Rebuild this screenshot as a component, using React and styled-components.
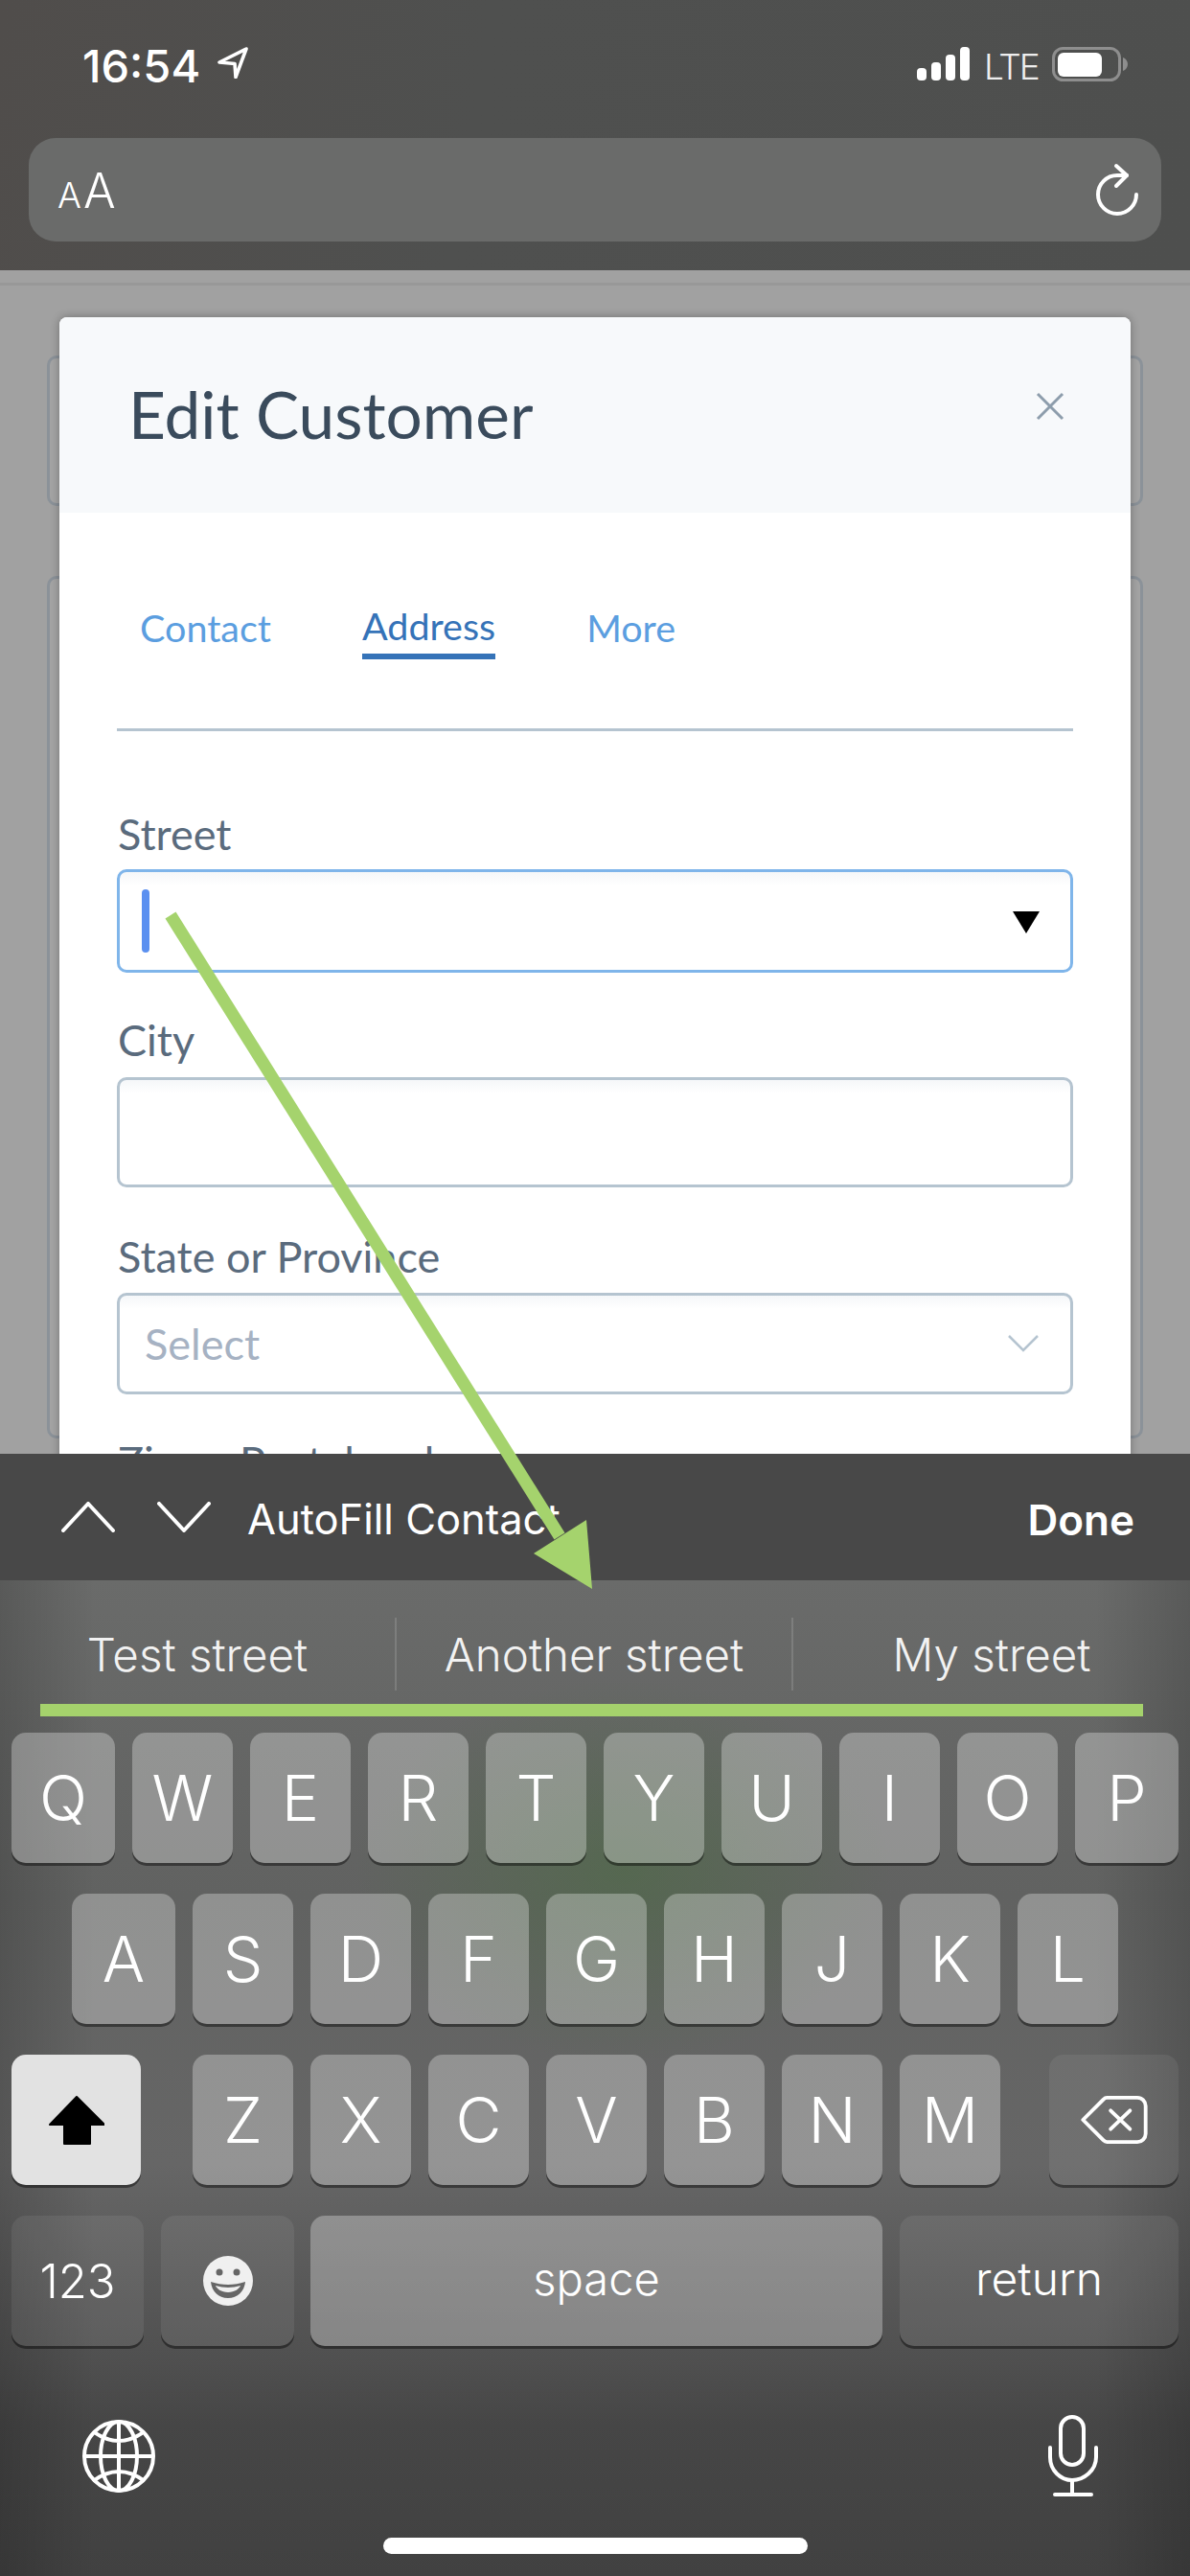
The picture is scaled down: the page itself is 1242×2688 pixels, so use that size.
import styled, { createGlobalStyle } from "styled-components";

const GlobalStyle = createGlobalStyle`
  html, body { margin: 0; padding: 0; background: #404040; }
  * { box-sizing: border-box; }
`;

const IOS_FONT = `Inter, "Liberation Sans", sans-serif`;
const WEB_FONT = `Lato, "Open Sans", sans-serif`;

const Screen = styled.div`
  position: relative;
  width: 1242px;
  height: 2688px;
  overflow: hidden;
  display: flex;
  flex-direction: column;
  font-family: ${IOS_FONT};
`;

/* browser chrome */
const Chrome = styled.div`
  height: 282px;
  flex: none;
  padding: 0 30px;
  background: linear-gradient(100deg, #504d4b 0%, #4f504f 40%, #4e4f4e 100%);
`;

const StatusBar = styled.div`
  height: 144px;
  display: flex;
  justify-content: space-between;
  padding: 49px 34px 0 56px;
`;

const StatusGroup = styled.div`
  display: flex;
  align-items: flex-start;
`;

const Time = styled.div`
  color: #fff;
  font-size: 47px;
  line-height: 40px;
  font-weight: 500;
  width: 141px;
`;

const Carrier = styled.div`
  color: #eee;
  font-size: 37px;
  line-height: 42px;
  width: 71px;
  margin-left: 14px;
  font-weight: 300;
  letter-spacing: -2px;
`;

const UrlBar = styled.div`
  height: 108px;
  border-radius: 28px;
  background: #6a6b6a;
  display: flex;
  align-items: center;
  justify-content: space-between;
  padding: 0 20px 0 30px;
`;

const TextSize = styled.div`
  color: #fff;
  font-weight: 300;
  display: flex;
  align-items: baseline;
  gap: 2px;
  font-size: 37px;
  padding-top: 2px;
`;

const TextSizeBig = styled.span`
  font-size: 50px;
`;

const ReloadWrap = styled.div`
  margin-top: 4px;
  display: flex;
`;

/* dimmed page with the dialog */
const Page = styled.div`
  position: relative;
  height: 1235px;
  flex: none;
  overflow: hidden;
  background: #a1a1a1;
  padding-top: 49px;
`;

const PageRule = styled.div`
  position: absolute;
  left: 0;
  right: 0;
  top: 13px;
  height: 3px;
  background: #989898;
`;

const BehindCard = styled.div`
  position: absolute;
  left: 49px;
  width: 1144px;
  top: ${(p) => p.$top}px;
  height: ${(p) => p.$height}px;
  border: 3px solid #8b9299;
  border-radius: 10px;
  background: #a4a4a4;
`;

const Dialog = styled.div`
  position: relative;
  width: 1118px;
  margin-left: 62px;
  height: 1300px;
  background: #fff;
  border-radius: 8px 8px 0 0;
  box-shadow: 0 0 10px rgba(0, 0, 0, 0.3);
  font-family: ${WEB_FONT};
`;

const DialogHeader = styled.div`
  height: 204px;
  background: #f7f9fb;
  border-radius: 8px 8px 0 0;
  display: flex;
  justify-content: space-between;
  align-items: flex-start;
  padding: 59px 68px 0 72px;
`;

const DialogTitle = styled.div`
  color: #3a4b5c;
  font-size: 67.500px;
  line-height: 84px;
  font-weight: 400;
`;

const CloseIcon = styled.svg`
  width: 32px;
  height: 32px;
  margin-top: 18px;
`;

const DialogBody = styled.div`
  padding: 93px 60px 0;
`;

const TabRow = styled.div`
  display: flex;
  gap: 95px;
  height: 60px;
  padding-left: 24px;
  align-items: flex-start;
  margin-bottom: 72px;
`;

const Tab = styled.div`
  height: ${(p) => (p.$active ? "60px" : "auto")};
  margin-top: ${(p) => (p.$active ? 0 : "2px")};
  font-size: 39.500px;
  line-height: 50px;
  color: ${(p) => (p.$active ? "#3573b8" : "#5b9ee0")};
  border-bottom: ${(p) => (p.$active ? "6px solid #3573b8" : "none")};
`;

const Divider = styled.div`
  height: 3px;
  background: #b5c4d0;
  margin-bottom: 81px;
`;

const Field = styled.div`
  margin-bottom: ${(p) => p.$gap}px;
`;

const FieldLabel = styled.div`
  color: #5a6b7d;
  font-size: 45px;
  line-height: 52px;
  padding-left: 1px;
  margin-bottom: ${(p) => p.$gap}px;
`;

const InputBox = styled.div`
  height: ${(p) => p.$height}px;
  border: 3px solid ${(p) => (p.$focused ? "#7fb5ea" : "#b5c4d0")};
  border-radius: 10px;
  background: linear-gradient(#f5f7f9, #fff 14px);
  display: flex;
  align-items: center;
  justify-content: space-between;
  padding: 0 ${(p) => p.$right || 30}px 0 23px;
`;

const Caret = styled.div`
  width: 8px;
  height: 66px;
  border-radius: 4px;
  background: #5b90f0;
`;

const NativeArrow = styled.div`
  width: 0;
  height: 0;
  margin-top: 2px;
  border-left: 14px solid transparent;
  border-right: 14px solid transparent;
  border-top: 23px solid #000;
`;

const Placeholder = styled.div`
  color: #a6b2c3;
  font-size: 45px;
  margin-left: 3px;
`;

/* keyboard */
const Keyboard = styled.div`
  flex: 1;
  display: flex;
  flex-direction: column;
  background:
    radial-gradient(ellipse 280px 200px at 650px 436px, rgba(70, 110, 60, 0.45), transparent),
    linear-gradient(90deg, rgba(0, 0, 0, 0.16), transparent 8%, transparent 92%, rgba(0, 0, 0, 0.16)),
    linear-gradient(#6a6b6a 132px, #666766 262px, #616261 462px, #666 742px, #505050 943px, #464646 1013px, #414141 1171px);
`;

const Toolbar = styled.div`
  height: 132px;
  flex: none;
  background: #484848;
  display: flex;
  align-items: center;
  padding: 6px 58px 0 64px;
`;

const ToolbarIcon = styled.svg`
  width: 56px;
  height: 32px;
  margin-right: ${(p) => p.$gap}px;
  margin-bottom: 6px;
`;

const AutoFill = styled.div`
  color: #fff;
  font-size: 43.500px;
  font-weight: 400;
  flex: 1;
  margin-bottom: 2px;
`;

const Done = styled.div`
  color: #fff;
  font-size: 44px;
  font-weight: 600;
`;

const Suggestions = styled.div`
  display: grid;
  grid-template-columns: repeat(3, 414px);
  margin-top: 39px;
`;

const Suggestion = styled.div`
  height: 76px;
  display: flex;
  align-items: center;
  justify-content: center;
  color: #f2f2f2;
  font-size: 47.500px;
  font-weight: 300;
  border-right: ${(p) => (p.$last ? "none" : "2px solid rgba(255,255,255,0.14)")};
`;

const GreenUnderline = styled.div`
  height: 13px;
  margin: 14px 49px 17px 42px;
  background: #a5d26c;
`;

const KeyRows = styled.div`
  display: flex;
  flex-direction: column;
  gap: 32px;
`;

const KeyRow = styled.div`
  display: flex;
  height: 136px;
  gap: 18px;
  padding-left: ${(p) => p.$left || 12}px;
`;

const Key = styled.div`
  width: ${(p) => p.$width || 105}px;
  margin-left: ${(p) => p.$offset || 0}px;
  padding-bottom: ${(p) => p.$lift || 0}px;
  flex: none;
  height: 136px;
  border-radius: 15px;
  display: flex;
  align-items: center;
  justify-content: center;
  color: ${(p) => (p.$light ? "#000" : "#fff")};
  font-size: ${(p) => p.$size || 66}px;
  font-weight: 300;
  background: ${(p) =>
    p.$light ? "#e2e2e2" : p.$dim ? "rgba(255,255,255,0.07)" : "rgba(255,255,255,0.3)"};
  box-shadow: 0 3px 0 rgba(0, 0, 0, 0.42);
`;

const BottomBar = styled.div`
  display: flex;
  justify-content: space-between;
  align-items: center;
  padding: 72px 93px 0 84px;
`;

const HomeIndicator = styled.div`
  width: 443px;
  height: 17px;
  border-radius: 9px;
  background: #fff;
  margin: 42px auto 0;
`;

/* green annotation arrow over the form */
const ArrowOverlay = styled.svg`
  position: absolute;
  left: 0;
  top: 0;
  width: 1242px;
  height: 2688px;
  pointer-events: none;
`;

const TOP_ROW = "QWERTYUIOP".split("");
const MID_ROW = "ASDFGHJKL".split("");
const LOW_ROW = "ZXCVBNM".split("");

const LocationIcon = () => (
  <svg width="32" height="33" viewBox="0 0 32 33" fill="none">
    <path d="M30 2 2 16l16 1.500 1 14z" stroke="#fff" strokeWidth="3.600" strokeLinejoin="round" />
  </svg>
);

const SignalIcon = () => (
  <svg width="56" height="36" viewBox="0 0 56 36" fill="#fff">
    <rect x="0" y="22" width="10" height="13" rx="4" />
    <rect x="15" y="16" width="10" height="19" rx="4" />
    <rect x="30" y="8" width="10" height="27" rx="4" />
    <rect x="45" y="0" width="10" height="35" rx="4" />
  </svg>
);

const BatteryIcon = () => (
  <svg width="80" height="38" viewBox="0 0 80 38">
    <rect x="1.500" y="1.500" width="69" height="33" rx="10" fill="none" stroke="#8e8e8e" strokeWidth="3" />
    <rect x="6" y="6" width="46" height="25" rx="6" fill="#fff" />
    <path d="M74 11c3 1 5 4 5 7s-2 6-5 7z" fill="#8e8e8e" />
  </svg>
);

const ReloadIcon = () => (
  <svg width="48" height="60" viewBox="0 0 48 60" fill="none" stroke="#fff" strokeWidth="4" strokeLinecap="round" strokeLinejoin="round">
    <path d="M42 33A20 20 0 1 1 22 13h10" />
    <path d="M21 3l11 10-11 11" />
  </svg>
);

const ShiftIcon = () => (
  <svg width="58" height="51" viewBox="0 0 58 51" fill="#000" stroke="#000" strokeWidth="2" strokeLinejoin="round">
    <path d="M29 1 1 30h15v20h27V30h15z" />
  </svg>
);

const BackspaceIcon = () => (
  <svg width="70" height="50" viewBox="0 0 72 52" fill="none" stroke="#fff" strokeWidth="4" strokeLinecap="round" strokeLinejoin="round">
    <path d="M2 26 24 4c1-1 2-2 4-2h33c5 0 9 4 9 9v30c0 5-4 9-9 9H28c-2 0-3-1-4-2z" />
    <path d="M32 16l21 20M53 16 32 36" />
  </svg>
);

const EmojiIcon = () => (
  <svg width="52" height="52" viewBox="0 0 52 52">
    <circle cx="26" cy="26" r="26" fill="#f0f0f0" />
    <circle cx="17" cy="17" r="3.500" fill="#666" />
    <circle cx="35" cy="17" r="3.500" fill="#666" />
    <path d="M8 27c6 2 12 3 18 3s12-1 18-3c-1 10-8 17-18 17S9 37 8 27z" fill="#666" />
    <path d="M13 31c4 1 9 2 13 2s9-1 13-2c-1 3-6 7-13 7s-12-4-13-7z" fill="#f0f0f0" />
  </svg>
);

const GlobeIcon = () => (
  <svg width="80" height="80" viewBox="-40 -40 80 80" fill="none" stroke="#fff" strokeWidth="4">
    <circle r="36" />
    <ellipse rx="19" ry="36" />
    <path d="M0-36V36M-36 0H36M-27-26Q0-6 27-26M-27 26Q0 6 27 26" />
  </svg>
);

const MicIcon = () => (
  <svg width="56" height="86" viewBox="0 0 56 86" fill="none" stroke="#fff" strokeWidth="4" strokeLinecap="round">
    <rect x="14" y="2" width="24" height="50" rx="12" />
    <path d="M3 34v10c0 14 11 24 23 24s25-10 25-24V34" />
    <path d="M26 68v15M8 83h38" />
  </svg>
);

const LabeledField = ({ label, labelGap, gap, children }) => (
  <Field $gap={gap}>
    <FieldLabel $gap={labelGap}>{label}</FieldLabel>
    {children}
  </Field>
);

export default function App() {
  return (
    <Screen>
      <GlobalStyle />
      <Chrome>
        <StatusBar>
          <StatusGroup>
            <Time>16:54</Time>
            <LocationIcon />
          </StatusGroup>
          <StatusGroup>
            <SignalIcon />
            <Carrier>LTE</Carrier>
            <BatteryIcon />
          </StatusGroup>
        </StatusBar>
        <UrlBar>
          <TextSize>
            A<TextSizeBig>A</TextSizeBig>
          </TextSize>
          <ReloadWrap>
            <ReloadIcon />
          </ReloadWrap>
        </UrlBar>
      </Chrome>

      <Page>
        <PageRule />
        <BehindCard $top={89} $height={157} />
        <BehindCard $top={319} $height={900} />
        <Dialog>
          <DialogHeader>
            <DialogTitle>Edit Customer</DialogTitle>
            <CloseIcon viewBox="0 0 32 32" fill="none" stroke="#8d9dac" strokeWidth="3">
              <path d="M3 3l26 26M29 3 3 29" />
            </CloseIcon>
          </DialogHeader>
          <DialogBody>
            <TabRow>
              <Tab>Contact</Tab>
              <Tab $active>Address</Tab>
              <Tab>More</Tab>
            </TabRow>
            <Divider />
            <LabeledField label="Street" labelGap={11} gap={44}>
              <InputBox $height={108} $focused $right={32}>
                <Caret />
                <NativeArrow />
              </InputBox>
            </LabeledField>
            <LabeledField label="City" labelGap={13} gap={46}>
              <InputBox $height={115} />
            </LabeledField>
            <LabeledField label="State or Province" labelGap={12} gap={44}>
              <InputBox $height={106} $right={33}>
                <Placeholder>Select</Placeholder>
                <svg width="32" height="18" viewBox="0 0 32 18" fill="none" stroke="#b5c4d0" strokeWidth="2.500">
                  <path d="M1 1l15 15L31 1" />
                </svg>
              </InputBox>
            </LabeledField>
            <FieldLabel>Zip or Postal code</FieldLabel>
          </DialogBody>
        </Dialog>
      </Page>

      <Keyboard>
        <Toolbar>
          <ToolbarIcon $gap={44} viewBox="0 0 56 32" fill="none" stroke="#fff" strokeWidth="4" strokeLinecap="round" strokeLinejoin="round">
            <path d="M2 30 28 2l26 28" />
          </ToolbarIcon>
          <ToolbarIcon $gap={38} viewBox="0 0 56 32" fill="none" stroke="#fff" strokeWidth="4" strokeLinecap="round" strokeLinejoin="round">
            <path d="M2 2l26 28L54 2" />
          </ToolbarIcon>
          <AutoFill>AutoFill Contact</AutoFill>
          <Done>Done</Done>
        </Toolbar>
        <Suggestions>
          <Suggestion>Test street</Suggestion>
          <Suggestion>Another street</Suggestion>
          <Suggestion $last>My street</Suggestion>
        </Suggestions>
        <GreenUnderline />
        <KeyRows>
          <KeyRow>
            {TOP_ROW.map((k, i) => (
              <Key key={k} $width={i === 0 || i === 9 ? 108 : 105}>{k}</Key>
            ))}
          </KeyRow>
          <KeyRow $left={75}>
            {MID_ROW.map((k, i) => (
              <Key key={k} $width={i === 0 ? 108 : 105}>{k}</Key>
            ))}
          </KeyRow>
          <KeyRow>
            <Key $width={135} $light><ShiftIcon /></Key>
            <Key $offset={36}>Z</Key>
            {LOW_ROW.slice(1).map((k) => (
              <Key key={k}>{k}</Key>
            ))}
            <Key $width={135} $dim $offset={33}><BackspaceIcon /></Key>
          </KeyRow>
          <KeyRow>
            <Key $width={138} $dim $size={49}>123</Key>
            <Key $width={139} $dim><EmojiIcon /></Key>
            <Key $width={597} $size={47} $offset={-1} $lift={6}>space</Key>
            <Key $width={291} $dim $size={48} $lift={6}>return</Key>
          </KeyRow>
        </KeyRows>
        <BottomBar>
          <GlobeIcon />
          <MicIcon />
        </BottomBar>
        <HomeIndicator />
      </Keyboard>

      <ArrowOverlay viewBox="0 0 1242 2688">
        <path d="M178 955 584 1603" stroke="#a5d36d" strokeWidth="13" fill="none" />
        <path d="M612 1586 618 1658 557 1621z" fill="#a5d36d" />
      </ArrowOverlay>
    </Screen>
  );
}
